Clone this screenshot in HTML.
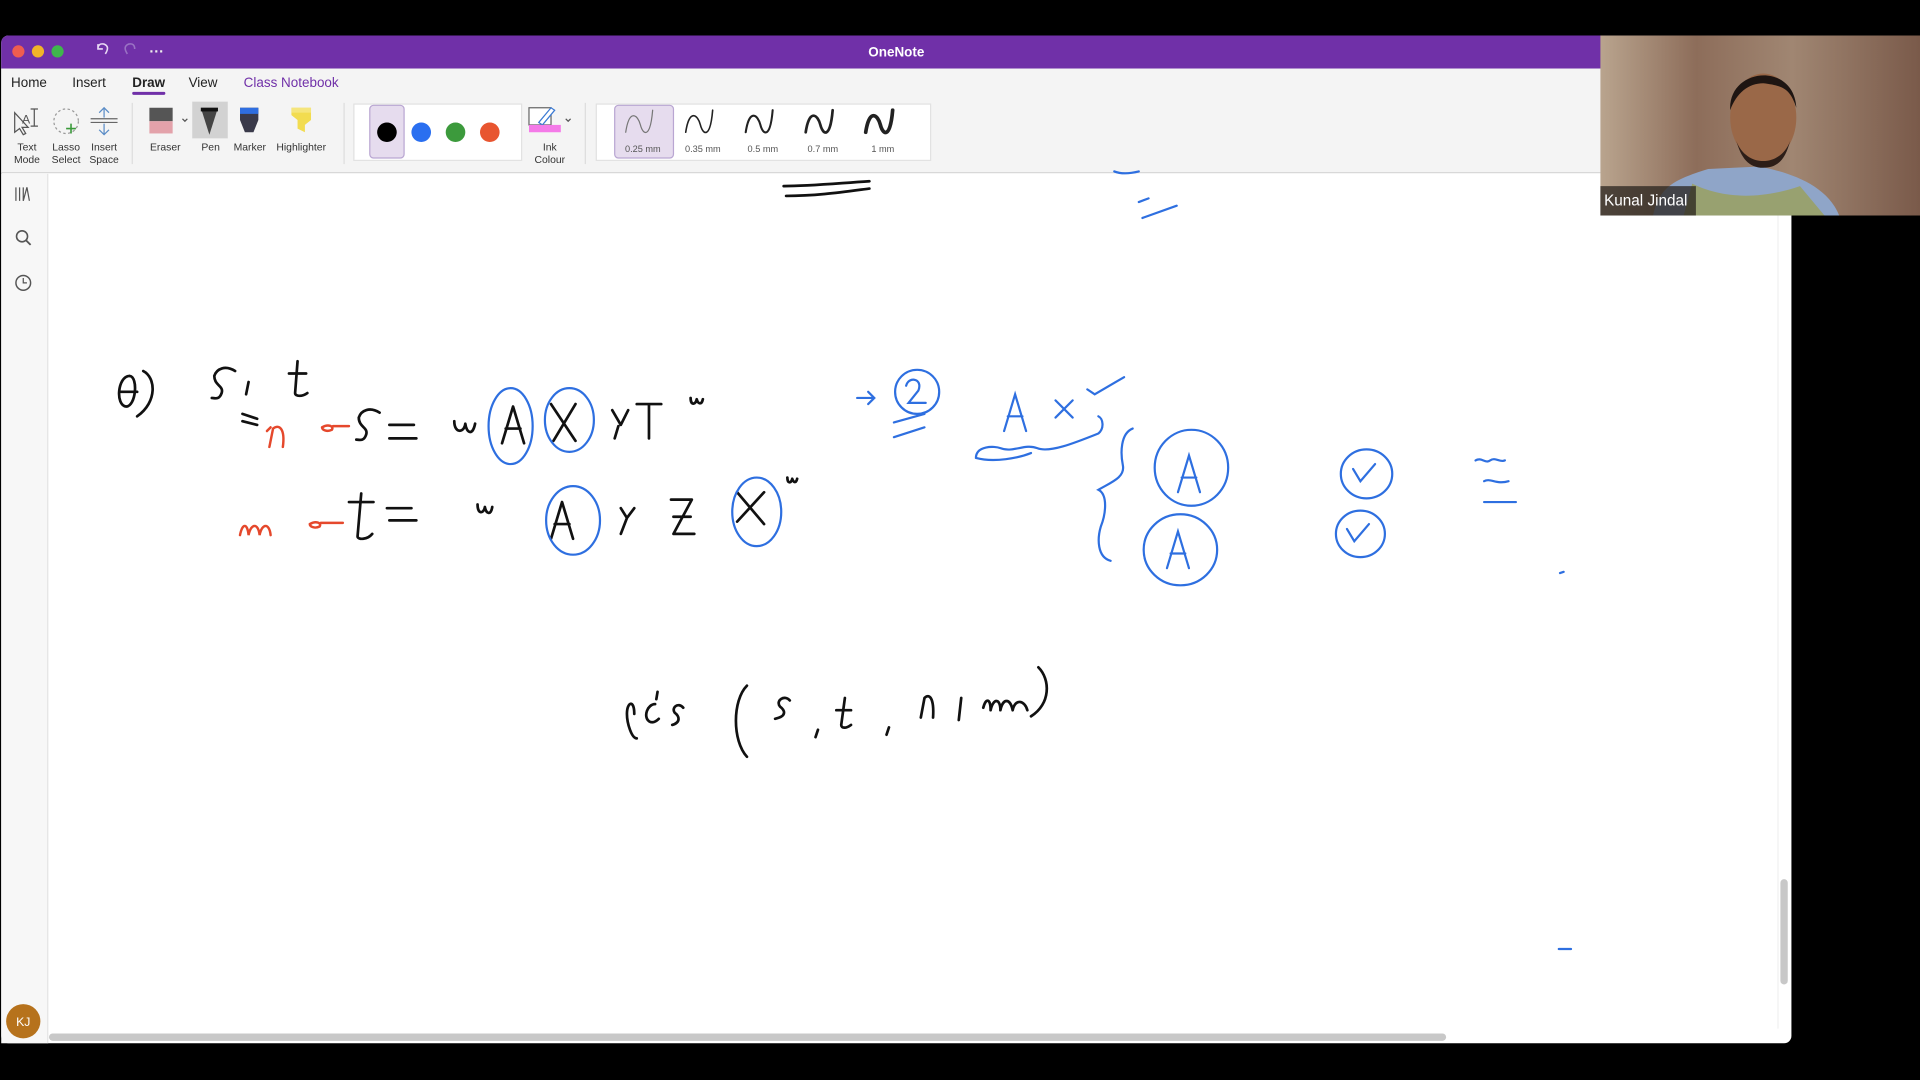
<!DOCTYPE html>
<html><head><meta charset="utf-8"><style>
html,body{margin:0;padding:0;background:#000;width:1920px;height:1080px;overflow:hidden}
svg{display:block}
text{font-family:"Liberation Sans",sans-serif}
</style></head><body>
<svg width="1920" height="1080" viewBox="0 0 1568 882" preserveAspectRatio="none" xmlns="http://www.w3.org/2000/svg">
<defs>
<linearGradient id="bg" x1="0" x2="1"><stop offset="0" stop-color="#b9a48e"/><stop offset="0.3" stop-color="#8d6d5a"/><stop offset="0.6" stop-color="#a08672"/><stop offset="1" stop-color="#7a5a4a"/></linearGradient>
</defs>
<rect width="1568" height="882" fill="#000"/>
<!-- window -->
<rect x="1" y="29" width="1462" height="823" rx="6" fill="#fff"/>
<path d="M1,35 a6,6 0 0 1 6,-6 H1463 V56 H1 Z" fill="#7030a8"/>
<circle cx="15" cy="42" r="5" fill="#ee5d50"/><circle cx="31" cy="42" r="5" fill="#f0b429"/><circle cx="47" cy="42" r="5" fill="#3fb64c"/>
<path d="M80,40 q0,-5 5,-4 q5,2 1,8 M80,36 v4 h4" fill="none" stroke="#e8d8f4" stroke-width="1.3"/>
<path d="M110,40 q0,-5 -5,-4 q-5,2 -1,8" fill="none" stroke="#9a72c4" stroke-width="1.3"/>
<text x="122" y="46" font-size="12" fill="#eee" font-weight="bold">···</text>
<text x="732" y="46" font-size="11" fill="#fff" font-weight="bold" text-anchor="middle">OneNote</text>
<!-- ribbon -->
<rect x="1" y="56" width="1462" height="85" fill="#f4f4f4"/>
<line x1="1" y1="141" x2="1463" y2="141" stroke="#d8d8d8"/>
<g font-size="11" fill="#222">
<text x="9" y="71">Home</text><text x="59" y="71">Insert</text><text x="108" y="71" font-weight="bold">Draw</text><text x="154" y="71">View</text><text x="199" y="71" fill="#7030a8">Class Notebook</text>
</g>
<rect x="108" y="75" width="27" height="2.5" rx="1" fill="#7030a8"/>
<g font-size="8.5" fill="#333" text-anchor="middle">
<text x="22" y="123">Text</text><text x="22" y="133">Mode</text>
<text x="54" y="123">Lasso</text><text x="54" y="133">Select</text>
<text x="85" y="123">Insert</text><text x="85" y="133">Space</text>
<text x="135" y="123">Eraser</text><text x="172" y="123">Pen</text><text x="204" y="123">Marker</text><text x="246" y="123">Highlighter</text>
<text x="449" y="123">Ink</text><text x="449" y="133">Colour</text>
</g>
<!-- tool icons -->
<path d="M12,92 l0,16 l4,-3 l3,5 l2,-1 l-3,-5 l5,0 z" fill="none" stroke="#555" stroke-width="1"/>
<text x="18" y="101" font-size="10" fill="#555">A</text><path d="M28,89 v14 M25,89 h6 M25,103 h6" stroke="#555"/>
<circle cx="54" cy="99" r="10" fill="none" stroke="#999" stroke-dasharray="2,2"/><path d="M58,101 v8 M54,105 h8" stroke="#3a9a3a" stroke-width="1.3"/>
<path d="M85,88 v22 M81,92 l4,-4 4,4 M81,106 l4,4 4,-4 M74,97 h22 M74,100 h22" stroke="#5a8cc6" fill="none"/>
<rect x="72" y="96" width="26" height="5" fill="#f4f4f4"/><path d="M74,97 h22 M74,100 h22" stroke="#666"/>
<line x1="108" y1="84" x2="108" y2="134" stroke="#ddd"/>
<rect x="122" y="88" width="19" height="11" fill="#555"/><rect x="122" y="99" width="19" height="10" fill="#e3a2aa"/>
<path d="M149,97 l2,2 2,-2" stroke="#555" fill="none"/>
<rect x="157" y="83" width="29" height="30" fill="#d2d2d2"/>
<path d="M164,88 h14 l-7,22 z" fill="#444"/><rect x="164" y="88" width="14" height="3" fill="#111"/>
<path d="M196,88 h15 v10 l-4,10 h-7 l-4,-10 z" fill="#3a3a4a"/><rect x="196" y="88" width="15" height="5" fill="#2f6ee0"/>
<path d="M238,88 h16 v10 l-5,4 v6 l-6,-3 v-7 l-5,-4 z" fill="#f2dc50"/><rect x="238" y="88" width="16" height="4" fill="#f5e57c"/>
<line x1="281" y1="84" x2="281" y2="134" stroke="#ddd"/>
<rect x="289" y="85" width="137" height="46" fill="#fff" stroke="#e2e2e2"/>
<rect x="302" y="86" width="28" height="43" rx="3" fill="#e6dcee" stroke="#b9a6d2"/>
<circle cx="316" cy="108" r="8" fill="#000"/><circle cx="344" cy="108" r="8" fill="#2a6ff0"/><circle cx="372" cy="108" r="8" fill="#3c9a3c"/><circle cx="400" cy="108" r="8" fill="#e85530"/>
<rect x="432" y="88" width="18" height="14" fill="#fff" stroke="#666"/><path d="M440,100 l10,-12 3,2 -10,12 z" fill="#fff" stroke="#3a7ad4"/>
<rect x="432" y="102" width="26" height="6" fill="#f47ae8"/><path d="M462,97 l2,2 2,-2" stroke="#555" fill="none"/>
<line x1="478" y1="84" x2="478" y2="134" stroke="#ddd"/>
<rect x="487" y="85" width="273" height="46" fill="#fff" stroke="#e2e2e2"/>
<rect x="502" y="86" width="48" height="43" rx="3" fill="#e6dcee" stroke="#b9a6d2"/>
<g fill="none" stroke="#222" stroke-linecap="round">
<path d="M511,108 c3,-20 10,-14 12,-6 s8,12 10,-12" stroke="#777" stroke-width="1"/>
<path d="M560,108 c3,-20 10,-14 12,-6 s8,12 10,-12" stroke-width="1.3"/>
<path d="M609,108 c3,-20 10,-14 12,-6 s8,12 10,-12" stroke-width="1.7"/>
<path d="M658,108 c3,-20 10,-14 12,-6 s8,12 10,-12" stroke-width="2.2"/>
<path d="M707,108 c3,-20 10,-14 12,-6 s8,12 10,-12" stroke-width="3"/>
</g>
<g font-size="7.5" fill="#555" text-anchor="middle">
<text x="525" y="124">0.25 mm</text><text x="574" y="124">0.35 mm</text><text x="623" y="124">0.5 mm</text><text x="672" y="124">0.7 mm</text><text x="721" y="124">1 mm</text>
</g>
<!-- sidebar -->
<rect x="1" y="142" width="38" height="710" fill="#f7f7f7"/>
<line x1="39" y1="142" x2="39" y2="852" stroke="#e4e4e4"/>
<path d="M13,153 v11 M16,153 v11 M19,153 v11 l3,-11 l2,11" stroke="#555" fill="none"/>
<circle cx="18" cy="193" r="4.5" fill="none" stroke="#555" stroke-width="1.3"/><path d="M21,196 l4,4" stroke="#555" stroke-width="1.5"/>
<circle cx="19" cy="231" r="6" fill="none" stroke="#555" stroke-width="1.2"/><path d="M19,227 v4 h3" stroke="#555" fill="none"/>
<circle cx="19" cy="834" r="14" fill="#b6721c"/><text x="19" y="838" font-size="10" fill="#fff" text-anchor="middle">KJ</text>
<!-- scrollbars -->
<rect x="40" y="844" width="1141" height="6" rx="3" fill="#c8c8c8"/>
<rect x="1454" y="718" width="6" height="86" rx="3" fill="#c8c8c8"/>
<line x1="1452" y1="142" x2="1452" y2="840" stroke="#f0f0f0"/>
<!-- handwriting black -->
<g fill="none" stroke="#111" stroke-width="2.2" stroke-linecap="round" stroke-linejoin="round">
<path d="M640,152 c20,0 40,-2 70,-4 M642,160 c25,0 45,-3 68,-6"/>
<path d="M106,307 c-10,0 -12,24 -3,25 c8,0 10,-24 3,-25 M98,320 h14 M117,303 c10,5 12,25 -5,37"/>
<path d="M192,303 c-8,-5 -15,-2 -17,4 c0,8 8,8 6,14 c-2,6 -6,4 -8,4 M203,312 l-2,10"/>
<path d="M243,295 l-2,26 c0,3 6,3 10,0 M236,305 h14"/>
<path d="M198,338 l12,4 M198,344 l12,3"/>
<path d="M310,337 c-8,-5 -15,-2 -17,4 c0,8 8,8 6,14 c-2,6 -6,4 -8,4 M318,347 h20 M318,358 h22"/>
<path d="M371,344 c0,10 8,10 9,2 c1,8 6,10 8,0"/>
<path d="M410,362 l9,-30 l9,30 M413,350 h12"/>
<path d="M450,330 l20,30 M470,330 l-18,30"/>
<path d="M500,335 l7,12 l6,-12 M505,348 l-3,10 M520,330 h20 M530,330 v28"/>
<path d="M564,325 c0,6 4,6 5,1 c1,4 4,5 5,0"/>
<path d="M295,403 l-3,35 c0,3 8,3 12,-2 M285,410 h20 M316,415 h20 M318,425 h22"/>
<path d="M390,412 c0,8 5,8 6,2 c1,6 5,7 6,0"/>
<path d="M450,440 l9,-30 l9,30 M453,428 h12"/>
<path d="M507,415 l5,8 l6,-8 M512,423 l-5,13 M548,408 h17 l-15,28 h17 M550,422 h14"/>
<path d="M602,402 l22,26 M624,402 l-22,24 M643,390 c0,5 3,5 4,1 c1,3 3,4 4,0"/>
<path d="M518,583 c0,-12 -6,-10 -6,0 c0,8 4,20 8,20 M535,575 c-6,0 -10,10 -5,14 c3,2 6,0 8,-2 M558,578 c-4,-5 -10,0 -7,4 c4,3 5,8 -2,10 M537,565 l-1,6"/>
<path d="M610,560 c-12,12 -12,45 0,58"/>
<path d="M645,572 c-4,-5 -12,0 -8,5 c4,3 6,8 -4,10 M668,596 l-2,6 M690,570 l-3,22 c0,3 4,3 8,0 M683,580 h12 M726,594 l-2,6"/>
<path d="M752,586 l3,-16 c4,-4 8,0 7,16 M785,570 l-2,18"/>
<path d="M803,578 c2,-8 6,-8 6,2 c2,-10 8,-10 8,0 c2,-10 8,-10 10,0 c2,-10 10,-8 12,0"/>
<path d="M848,545 c10,10 10,30 -6,40"/>
</g>
<!-- red -->
<g fill="none" stroke="#e5482c" stroke-width="2" stroke-linecap="round">
<path d="M220,365 l3,-15 c5,-4 10,0 8,15 M218,352 l3,-3"/>
<path d="M263,349 c5,-3 10,-1 8,2 c-4,2 -8,0 -8,-2 M272,348 h13"/>
<path d="M196,437 c2,-10 6,-10 7,0 c2,-10 8,-10 9,0 c2,-10 8,-10 9,0"/>
<path d="M253,428 c5,-3 10,-1 8,2 c-4,2 -8,0 -8,-2 M262,427 h18"/>
</g>
<!-- blue -->
<g fill="none" stroke="#2e6fe0" stroke-width="1.8" stroke-linecap="round">
<ellipse cx="417" cy="348" rx="18" ry="31"/>
<ellipse cx="465" cy="343" rx="20" ry="26"/>
<ellipse cx="468" cy="425" rx="22" ry="28"/>
<ellipse cx="618" cy="418" rx="20" ry="28"/>
<path d="M910,140 c5,2 12,2 20,0 M930,165 l8,-3 M933,178 l28,-10"/>
<path d="M700,325 h14 M709,320 l5,5 -5,5"/>
<ellipse cx="749" cy="320" rx="18" ry="18"/><path d="M740,315 c2,-8 14,-6 10,4 l-8,10 h14"/>
<path d="M730,345 l25,-7 M730,357 l25,-8"/>
<path d="M820,352 l9,-30 l9,30 M823,340 h12 M862,327 l14,14 M876,327 l-14,14 M888,318 l6,4 l24,-14"/>
<path d="M797,374 c0,-10 15,-10 20,-8 c10,4 20,-4 30,0 c10,4 30,-4 50,-12 c5,-4 4,-12 0,-14 M797,374 c15,4 35,0 45,-4"/>
<path d="M925,350 c-10,4 -10,20 -8,30 c2,10 -10,14 -20,20 c8,4 6,20 2,30 c-3,10 -3,25 8,28"/>
<ellipse cx="973" cy="382" rx="30" ry="31"/><path d="M962,402 l9,-30 l9,30 M965,390 h12"/>
<ellipse cx="964" cy="449" rx="30" ry="29"/><path d="M953,464 l9,-30 l9,30 M956,452 h12"/>
<ellipse cx="1116" cy="387" rx="21" ry="20"/><path d="M1105,383 l6,10 l12,-14"/>
<ellipse cx="1111" cy="436" rx="20" ry="19"/><path d="M1100,432 l6,10 l12,-14"/>
<path d="M1205,376 c5,-3 8,3 12,0 c4,-3 8,2 12,0 M1212,393 c5,-3 10,3 20,0 M1212,410 h26"/>
<path d="M1274,468 l3,-1 M1273,775 h10"/>
</g>
<!-- webcam -->
<rect x="1307" y="29" width="261" height="147" fill="url(#bg)"/>
<path d="M1350,176 c5,-25 20,-30 45,-38 l42,-2 c25,5 55,15 65,40 z" fill="#8fa5c8"/>
<path d="M1382,150 c20,10 50,15 88,2 l20,24 h-115 z" fill="#9aa05a" opacity="0.8"/>
<ellipse cx="1440" cy="96" rx="27" ry="36" fill="#9a6848"/>
<path d="M1413,90 c-2,-35 52,-40 54,-2 c-5,-15 -10,-18 -27,-20 c-12,0 -22,8 -27,22 z" fill="#1e1512"/>
<path d="M1418,115 c8,22 36,22 44,0 c-4,15 -10,22 -22,22 c-12,0 -18,-8 -22,-22z" fill="#2d1e18"/>
<rect x="1307" y="152" width="78" height="24" fill="rgba(40,35,30,0.75)"/>
<text x="1310" y="168" font-size="12.5" fill="#fff">Kunal Jindal</text>
</svg>
</body></html>
